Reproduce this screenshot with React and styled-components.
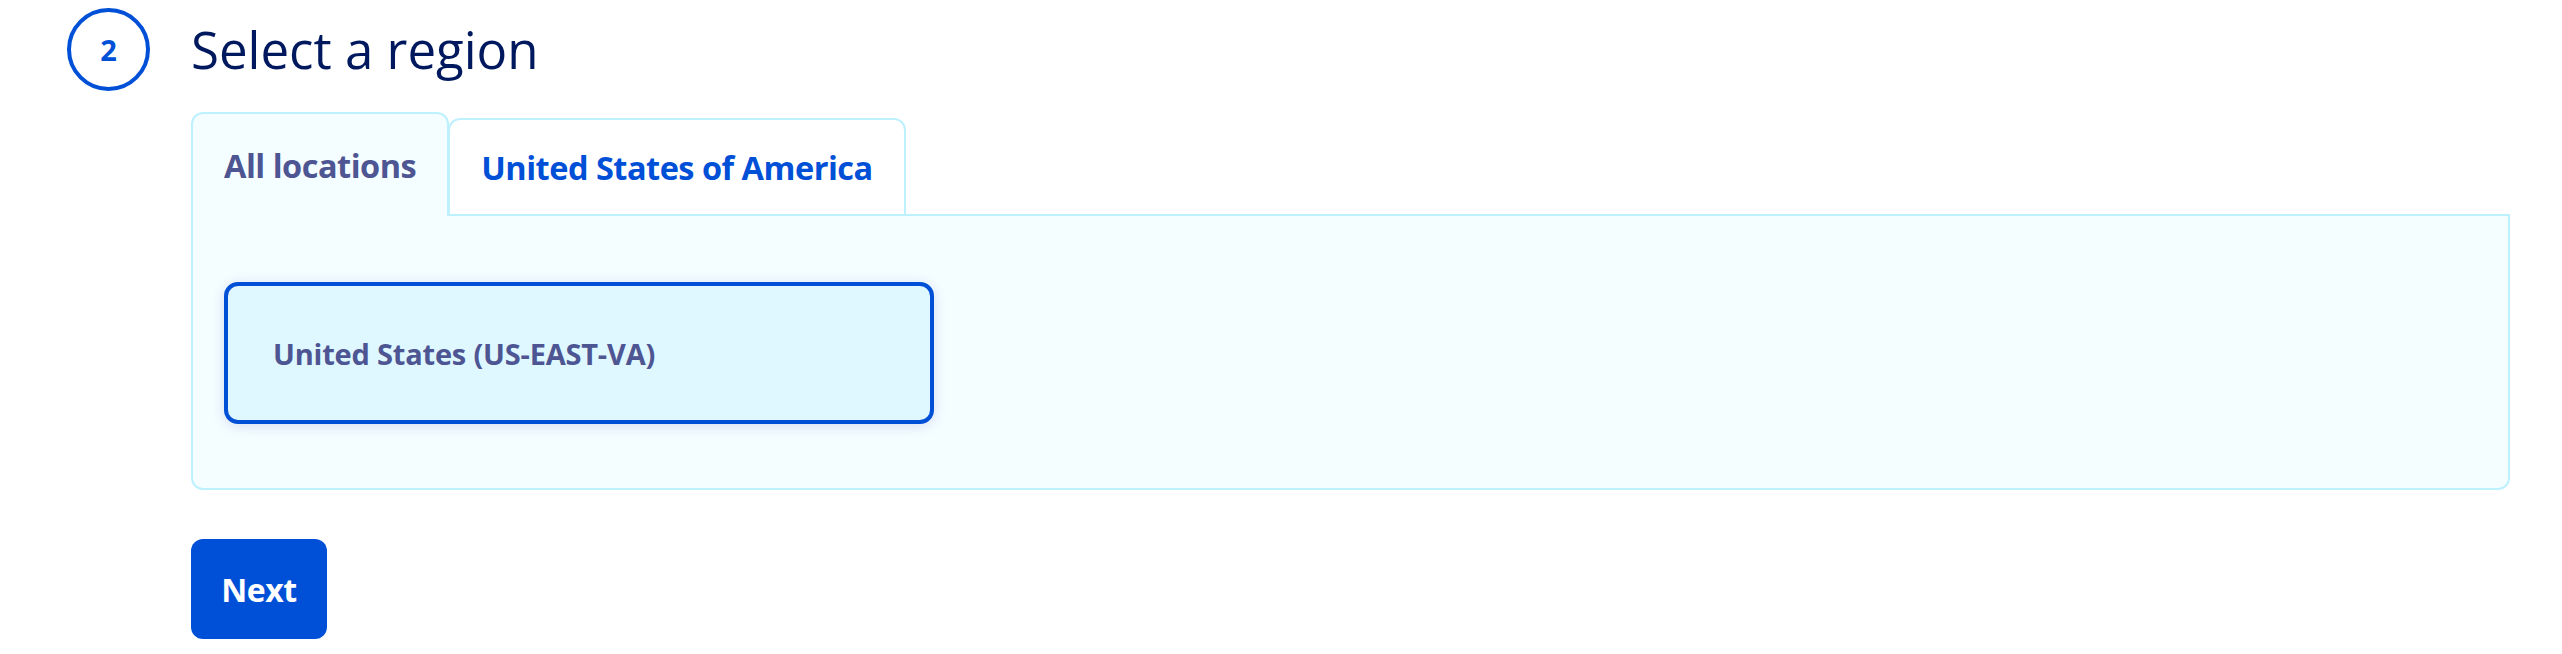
import React, { useState } from 'react';
import styled, { createGlobalStyle } from 'styled-components';

const GlobalStyle = createGlobalStyle`
  html, body {
    margin: 0;
    padding: 0;
    background: #ffffff;
  }
  body {
    font-family: "Open Sans", "Noto Sans", sans-serif;
  }
`;

const Step = styled.section`
  padding: 8px 52px 15px 67px;
`;

const Header = styled.div`
  display: flex;
  align-items: center;
  gap: 41px;
`;

const StepNumber = styled.div`
  width: 83px;
  height: 83px;
  box-sizing: border-box;
  border: 4px solid #0050d7;
  border-radius: 50%;
  display: flex;
  align-items: center;
  justify-content: center;
  color: #0050d7;
  font-size: 29px;
  font-weight: 700;
  flex-shrink: 0;
`;

const Title = styled.h2`
  margin: 0;
  font-size: 51px;
  font-weight: 400;
  line-height: 1;
  color: #00185e;
`;

const Body = styled.div`
  margin-left: 124px;
  padding-top: 21px;
`;

const TabList = styled.div`
  display: flex;
  align-items: flex-end;
`;

const Tab = styled.button`
  position: relative;
  z-index: ${(p) => (p.$active ? 1 : 0)};
  box-sizing: border-box;
  display: flex;
  align-items: center;
  height: ${(p) => (p.$active ? '104px' : '96px')};
  margin: 0 0 ${(p) => (p.$active ? '-2px' : '0')} ${(p) => (p.$first ? '0' : '-1px')};
  padding: 0 31px;
  border: 2px solid #bef1ff;
  border-bottom: none;
  border-radius: 12px 12px 0 0;
  background: ${(p) => (p.$active ? '#f4fdff' : '#ffffff')};
  color: ${(p) => (p.$active ? '#4d5592' : '#0050d7')};
  font-family: "Open Sans", "Noto Sans", sans-serif;
  font-size: 32.5px;
  font-weight: 700;
  letter-spacing: -0.5px;
  cursor: pointer;
`;

const Panel = styled.div`
  box-sizing: border-box;
  border: 2px solid #bef1ff;
  border-radius: 0 0 12px 12px;
  background: #f4fdff;
  padding: 66px 31px 64px;
`;

const RegionCard = styled.button`
  box-sizing: border-box;
  width: 710px;
  height: 142px;
  display: flex;
  align-items: center;
  padding: 0 45px;
  border: 4px solid ${(p) => (p.$selected ? '#0050d7' : '#bef1ff')};
  border-radius: 14px;
  background: ${(p) => (p.$selected ? '#dff7ff' : '#ffffff')};
  box-shadow: 0 2px 14px rgba(0, 14, 156, 0.12);
  color: #4d5592;
  font-family: "Open Sans", "Noto Sans", sans-serif;
  font-size: 29px;
  font-weight: 700;
  letter-spacing: -0.2px;
  cursor: pointer;
`;

const NextButton = styled.button`
  margin-top: 49px;
  width: 136px;
  height: 100px;
  border: none;
  border-radius: 12px;
  background: #0050d7;
  color: #ffffff;
  font-family: "Open Sans", "Noto Sans", sans-serif;
  font-size: 32px;
  font-weight: 700;
  letter-spacing: -0.5px;
  cursor: pointer;
`;

const tabs = ['All locations', 'United States of America'];

export default function App() {
  const [active, setActive] = useState(0);

  return (
    <>
      <GlobalStyle />
      <Step>
        <Header>
          <StepNumber>2</StepNumber>
          <Title>Select a region</Title>
        </Header>
        <Body>
          <TabList role="tablist">
            {tabs.map((t, i) => (
              <Tab
                key={t}
                role="tab"
                $first={i === 0}
                $active={active === i}
                onClick={() => setActive(i)}
              >
                {t}
              </Tab>
            ))}
          </TabList>
          <Panel role="tabpanel">
            <RegionCard $selected>United States (US-EAST-VA)</RegionCard>
          </Panel>
          <NextButton>Next</NextButton>
        </Body>
      </Step>
    </>
  );
}
